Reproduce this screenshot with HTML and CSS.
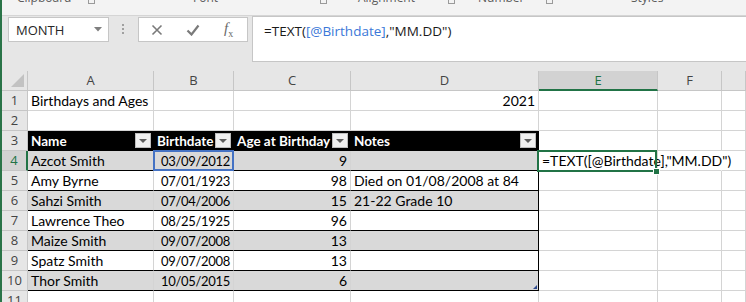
FILE: index.html
```html
<!DOCTYPE html>
<html lang="en">
<head>
    <meta charset="UTF-8">
    <title>Birthdays and Ages - Excel</title>
    <link rel="stylesheet" href="styles.css">
</head>
<body>
    <div class="app">
        <div class="ribbon">
            <span></span>
            <span class="rib-label">Clipboard</span>
            <span><i class="launcher"></i></span>
            <span class="rib-label">Font</span>
            <span><i class="launcher"></i></span>
            <span class="rib-label">Alignment</span>
            <span><i class="launcher"></i></span>
            <span class="rib-label">Number</span>
            <span><i class="launcher"></i></span>
            <span class="rib-label">Styles</span>
            <span></span>
        </div>

        <div class="formula-bar">
            <div class="name-box">
                <span>MONTH</span>
                <svg class="caret" width="8" height="5" viewBox="0 0 8 5"><path d="M0 0h8L4 4.5z" fill="#7f7f7f"/></svg>
            </div>
            <div class="grip"><i></i><i></i><i></i></div>
            <div class="fx-box">
                <svg width="12" height="12" viewBox="0 0 12 12"><path d="M1.5 1.5l9 9M10.5 1.5l-9 9" stroke="#7a7a7a" stroke-width="1.6" fill="none"/></svg>
                <svg width="14" height="12" viewBox="0 0 14 12"><path d="M1.5 6.5l4 4L12.5 1.5" stroke="#7a7a7a" stroke-width="2.2" fill="none"/></svg>
                <span class="fx"><i>f</i><sub>x</sub></span>
            </div>
            <div class="formula-input">=TEXT(<span class="ref">[@Birthdate]</span>,"MM.DD")</div>
        </div>

        <div class="sheet">
            <div class="row heads">
                <div class="c rh corner"></div>
                <div class="c ca">A</div>
                <div class="c cb">B</div>
                <div class="c cc">C</div>
                <div class="c cd">D</div>
                <div class="c ce active-col">E</div>
                <div class="c cf">F</div>
                <div class="c cg"></div>
            </div>
            <div class="row">
                <div class="c rh">1</div>
                <div class="c ca">Birthdays and Ages</div>
                <div class="c cb"></div>
                <div class="c cc"></div>
                <div class="c cd num">2021</div>
                <div class="c ce"></div>
                <div class="c cf"></div>
                <div class="c cg"></div>
            </div>
            <div class="row">
                <div class="c rh">2</div>
                <div class="c ca"></div>
                <div class="c cb"></div>
                <div class="c cc"></div>
                <div class="c cd"></div>
                <div class="c ce"></div>
                <div class="c cf"></div>
                <div class="c cg"></div>
            </div>
            <div class="row">
                <div class="c rh">3</div>
                <div class="c ca th">Name<span class="filter"></span></div>
                <div class="c cb th">Birthdate<span class="filter"></span></div>
                <div class="c cc th">Age at Birthday<span class="filter"></span></div>
                <div class="c cd th tend">Notes<span class="filter"></span></div>
                <div class="c ce"></div>
                <div class="c cf"></div>
                <div class="c cg"></div>
            </div>
            <div class="row band">
                <div class="c rh active-row">4</div>
                <div class="c ca td">Azcot Smith</div>
                <div class="c cb td num picked">03/09/2012</div>
                <div class="c cc td num">9</div>
                <div class="c cd td tend"></div>
                <div class="c ce current">=TEXT([@Birthdate],"MM.DD")<span class="fill-handle"></span></div>
                <div class="c cf spill"></div>
                <div class="c cg"></div>
            </div>
            <div class="row">
                <div class="c rh">5</div>
                <div class="c ca td">Amy Byrne</div>
                <div class="c cb td num">07/01/1923</div>
                <div class="c cc td num">98</div>
                <div class="c cd td tend">Died on 01/08/2008 at 84</div>
                <div class="c ce"></div>
                <div class="c cf"></div>
                <div class="c cg"></div>
            </div>
            <div class="row band">
                <div class="c rh">6</div>
                <div class="c ca td">Sahzi Smith</div>
                <div class="c cb td num">07/04/2006</div>
                <div class="c cc td num">15</div>
                <div class="c cd td tend">21-22 Grade 10</div>
                <div class="c ce"></div>
                <div class="c cf"></div>
                <div class="c cg"></div>
            </div>
            <div class="row">
                <div class="c rh">7</div>
                <div class="c ca td">Lawrence Theo</div>
                <div class="c cb td num">08/25/1925</div>
                <div class="c cc td num">96</div>
                <div class="c cd td tend"></div>
                <div class="c ce"></div>
                <div class="c cf"></div>
                <div class="c cg"></div>
            </div>
            <div class="row band">
                <div class="c rh">8</div>
                <div class="c ca td">Maize Smith</div>
                <div class="c cb td num">09/07/2008</div>
                <div class="c cc td num">13</div>
                <div class="c cd td tend"></div>
                <div class="c ce"></div>
                <div class="c cf"></div>
                <div class="c cg"></div>
            </div>
            <div class="row">
                <div class="c rh">9</div>
                <div class="c ca td">Spatz Smith</div>
                <div class="c cb td num">09/07/2008</div>
                <div class="c cc td num">13</div>
                <div class="c cd td tend"></div>
                <div class="c ce"></div>
                <div class="c cf"></div>
                <div class="c cg"></div>
            </div>
            <div class="row band">
                <div class="c rh">10</div>
                <div class="c ca td">Thor Smith</div>
                <div class="c cb td num">10/05/2015</div>
                <div class="c cc td num">6</div>
                <div class="c cd td tend resize"></div>
                <div class="c ce"></div>
                <div class="c cf"></div>
                <div class="c cg"></div>
            </div>
            <div class="row">
                <div class="c rh">11</div>
                <div class="c ca"></div>
                <div class="c cb"></div>
                <div class="c cc"></div>
                <div class="c cd"></div>
                <div class="c ce"></div>
                <div class="c cf"></div>
                <div class="c cg"></div>
            </div>
        </div>
    </div>
</body>
</html>
```

FILE: styles.css
```css
body {
    margin: 0;
    padding: 0;
    background-color: #e6e6e6;
    font-family: "Open Sans", sans-serif;
}
.app {
    width: 746px;
    height: 302px;
    overflow: hidden;
    box-sizing: border-box;
    border-left: 2px solid #2a7448;
    background-color: #e6e6e6;
}

/* ribbon group labels, cut off at the top */
.ribbon {
    display: grid;
    grid-template-columns: 15px 71px 105px 127px 38px 90px 30px 68px 85px 105px 1fr;
    height: 15px;
    overflow: hidden;
    background-color: #f3f3f3;
    border-bottom: 1px solid #d5d5d5;
}
.rib-label {
    font-size: 12px;
    line-height: 12px;
    color: #5c5c5c;
    margin-top: -8px;
    white-space: nowrap;
}
.launcher {
    display: block;
    width: 5px;
    height: 3px;
    border: 1px solid #9a9a9a;
    border-top: none;
}

/* formula bar */
.formula-bar {
    display: flex;
    height: 55px;
    padding-left: 6px;
}
.name-box {
    display: flex;
    align-items: center;
    justify-content: space-between;
    box-sizing: border-box;
    width: 101px;
    height: 25px;
    margin-top: 1px;
    padding: 0 6px 0 7px;
    background-color: #fff;
    border: 1px solid #c6c6c6;
    font-size: 13px;
    color: #262626;
}
.grip {
    display: flex;
    flex-direction: column;
    gap: 2px;
    margin: 8px 0 0 13px;
}
.grip i {
    width: 2px;
    height: 2px;
    background-color: #a0a0a0;
}
.fx-box {
    display: flex;
    align-items: center;
    box-sizing: border-box;
    width: 110px;
    height: 25px;
    margin: 1px 0 0 14px;
    padding-left: 12px;
    gap: 23px;
    background-color: #fff;
    border: 1px solid #c6c6c6;
}
.fx {
    font-family: "Liberation Serif", serif;
    font-size: 15px;
    color: #6a6a6a;
    margin-left: 1px;
}
.fx sub {
    font-size: 10px;
}
.formula-input {
    flex: 1;
    box-sizing: border-box;
    height: 46px;
    margin-left: 4px;
    padding: 4px 0 0 11px;
    background-color: #fff;
    border: 1px solid #c6c6c6;
    border-right: none;
    font-size: 13.5px;
    line-height: 20px;
    color: #1a1a1a;
}
.formula-input .ref {
    color: #3b78d8;
}

/* worksheet */
.sheet {
    background-color: #fff;
}
.row {
    display: flex;
    height: 20px;
}
.c {
    box-sizing: border-box;
    flex: none;
    height: 20px;
    padding: 0 3px;
    border-right: 1px solid #d4d4d4;
    border-bottom: 1px solid #d4d4d4;
    font-family: "Lato", sans-serif;
    font-size: 14px;
    line-height: 20px;
    color: #000;
    white-space: nowrap;
}
.rh { width: 26px; }
.ca { width: 126px; }
.cb { width: 80px; }
.cc { width: 117px; }
.cd { width: 188px; }
.ce { width: 119px; }
.cf { width: 64px; }
.cg { flex: 1; }

.rh, .heads .c {
    background-color: #e6e6e6;
    border-color: #c6c6c6;
    font-family: "Open Sans", sans-serif;
    font-size: 13px;
    color: #444;
    text-align: center;
    padding: 0;
    line-height: 19px;
}
.corner {
    position: relative;
}
.corner::after {
    content: "";
    position: absolute;
    right: 3px;
    bottom: 3px;
    border-left: 13px solid transparent;
    border-bottom: 13px solid #c2c2c2;
}
.heads .active-col {
    background-color: #d2d2d2;
    border-bottom: 2px solid #217346;
    color: #217346;
}
.rh.active-row {
    background-color: #d2d2d2;
    border-right: 2px solid #217346;
    width: 26px;
    color: #217346;
}

.num {
    text-align: right;
    padding-right: 3px;
}
.cb.num {
    font-size: 13px;
    letter-spacing: -0.3px;
}

/* table header row */
.th {
    display: flex;
    align-items: center;
    justify-content: space-between;
    background-color: #000;
    border-color: #000;
    color: #fff;
    font-size: 13.5px;
    font-weight: bold;
    padding-right: 2px;
}
.filter {
    display: flex;
    align-items: center;
    justify-content: center;
    box-sizing: border-box;
    width: 16px;
    height: 15px;
    background-color: #efefef;
    border: 1px solid #bdbdbd;
}
.filter::after {
    content: "";
    border-left: 4px solid transparent;
    border-right: 4px solid transparent;
    border-top: 4px solid #5e5e5e;
}

/* table body */
.td {
    border-bottom-color: #000;
}
.band .td {
    background-color: #d9d9d9;
}
.tend {
    border-right-color: #000;
}
.resize {
    position: relative;
}
.resize::after {
    content: "";
    position: absolute;
    right: 1px;
    bottom: 1px;
    border-left: 4px solid transparent;
    border-bottom: 4px solid #2f4b8f;
}

/* selections */
.picked {
    position: relative;
}
.picked::after {
    content: "";
    position: absolute;
    left: -1px;
    top: -1px;
    right: -1px;
    bottom: -1px;
    border: 2px solid #4472c4;
}
.current {
    position: relative;
    overflow: visible;
    z-index: 1;
}
.current::after {
    content: "";
    position: absolute;
    left: -2px;
    top: -1px;
    right: 0;
    bottom: -2px;
    border: 2px solid #217346;
}
.fill-handle {
    position: absolute;
    right: -3px;
    bottom: -5px;
    width: 5px;
    height: 5px;
    background-color: #217346;
    border: 1px solid #fff;
    z-index: 2;
}
.spill {
    border-right-color: #fff;
}
```
